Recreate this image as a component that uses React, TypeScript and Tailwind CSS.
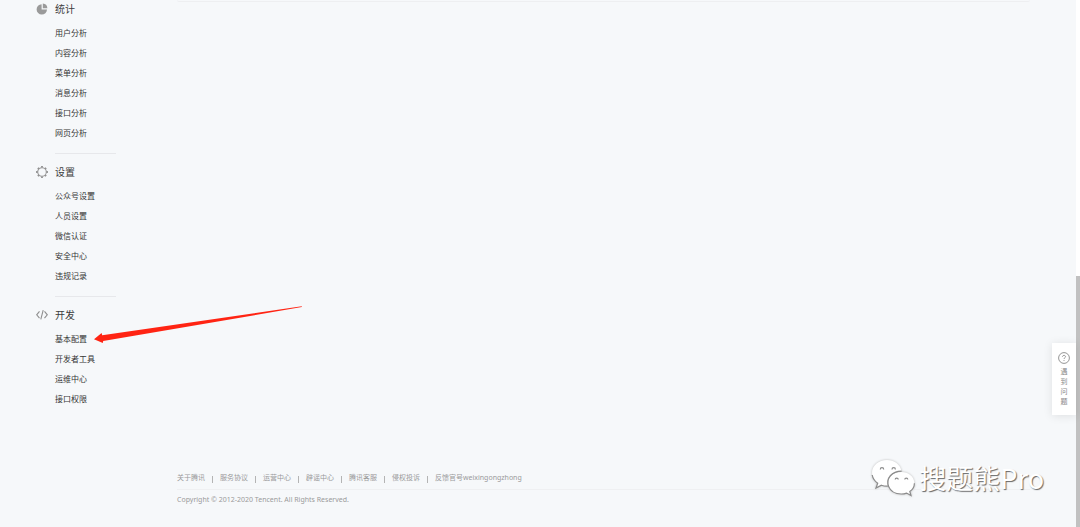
import type { ReactNode } from "react";

const FONT = "font-['Noto_Sans','Noto_Sans_CJK_SC',sans-serif]";

function ChartIcon() {
  return (
    <svg viewBox="0 0 12 12" className="size-3" fill="#9a9a9a" aria-hidden="true">
      <path d="M5.6 1.2V6.6H11A5.2 5.2 0 1 1 5.6 1.2Z" />
      <path d="M6.8 0.6A5 5 0 0 1 11.4 5.2H6.8Z" />
    </svg>
  );
}

function GearIcon() {
  return (
    <svg viewBox="0 0 12 12" className="size-3" aria-hidden="true">
      <circle cx="6" cy="6" r="4.3" fill="none" stroke="#9a9a9a" strokeWidth="1.1" />
      <g stroke="#8f8f8f" strokeWidth="1.8">
        <path d="M6 0.1V1.6M6 10.4V11.9M0.1 6H1.6M10.4 6H11.9" />
        <path d="M1.9 1.9L2.9 2.9M9.1 9.1L10.1 10.1M10.1 1.9L9.1 2.9M2.9 9.1L1.9 10.1" />
      </g>
    </svg>
  );
}

function CodeIcon() {
  return (
    <svg viewBox="0 0 12 12" className="size-3" fill="none" stroke="#8f8f8f" strokeWidth="1.1" aria-hidden="true">
      <path d="M3.5 2.4L0.7 5.8L3.5 9.2M8.5 2.4L11.3 5.8L8.5 9.2M7.2 1.2L4.8 10.4" />
    </svg>
  );
}

const MENU: { title: string; icon: ReactNode; items: string[] }[] = [
  { title: "统计", icon: <ChartIcon />, items: ["用户分析", "内容分析", "菜单分析", "消息分析", "接口分析", "网页分析"] },
  { title: "设置", icon: <GearIcon />, items: ["公众号设置", "人员设置", "微信认证", "安全中心", "违规记录"] },
  { title: "开发", icon: <CodeIcon />, items: ["基本配置", "开发者工具", "运维中心", "接口权限"] },
];

const LINKS = ["关于腾讯", "服务协议", "运营中心", "辟谣中心", "腾讯客服", "侵权投诉", "反馈官号weixingongzhong"];

function Sidebar() {
  return (
    <nav className="w-[177px] shrink-0 pl-9">
      {MENU.map((group, i) => (
        <section key={group.title}>
          {i > 0 && <hr className="ml-[19px] mt-2.5 mb-[9px] w-[61px] border-[#e7e8eb]" />}
          <h2 className="flex h-[18px] items-center gap-[7px] text-[10px] text-[#3c3c3c]">
            {group.icon}
            {group.title}
          </h2>
          <ul className="mt-[5px] ml-[19px] text-[8px] leading-5 text-[#353535]">
            {group.items.map(item => (
              <li key={item}>
                <a href="#" className="block">{item}</a>
              </li>
            ))}
          </ul>
        </section>
      ))}
    </nav>
  );
}

function Footer() {
  return (
    <footer className="pb-5 text-[7px] text-[#9a9a9a]">
      <ul className="flex items-center border-b border-[#eff0f2] pb-[3px] leading-4">
        {LINKS.map((link, i) => (
          <li key={link} className="flex items-center">
            {i > 0 && <span className="mx-[7px] mt-0.5 h-[7px] w-px bg-[#b4b4b4]" />}
            <a href="#">{link}</a>
          </li>
        ))}
      </ul>
      <p className="pt-[3px] leading-[14px]">Copyright © 2012-2020 Tencent. All Rights Reserved.</p>
    </footer>
  );
}

function HelpButton() {
  return (
    <button className="absolute top-[343px] right-1 flex w-6 flex-col items-center bg-white pt-[9px] pb-2 text-[7px] leading-[10px] text-[#8a8a8a] shadow-[0_1px_10px_rgba(0,0,0,0.1)]">
      <svg viewBox="0 0 12 12" className="mb-[3px] size-3" fill="none" stroke="#8a8a8a" strokeWidth="0.9" aria-hidden="true">
        <circle cx="6" cy="6" r="5.4" />
        <path d="M4.5 4.8C4.5 2.9 7.5 2.9 7.5 4.7C7.5 5.8 6 5.8 6 7M6 8V8.9" />
      </svg>
      <span className="w-[7px] break-all">遇到问题</span>
    </button>
  );
}

function Arrow() {
  return (
    <svg viewBox="0 0 210 40" className="absolute top-[305px] left-[93px] h-10 w-[210px]" fill="#ff2413" aria-hidden="true">
      <path d="M1 34.3L8.6 28L9.2 30.3L208.8 1.2L208.8 2.1L10.2 36L9.8 38Z" />
    </svg>
  );
}

function Watermark() {
  return (
    <div className="absolute right-9 bottom-[30px] flex items-center gap-1">
      <svg viewBox="0 0 44 38" className="h-[38px] w-11 drop-shadow-[0_0_1px_#bbb]" fill="#fff" aria-hidden="true">
        <path d="M16 1C7.4 1 1 6.6 1 14C1 18.2 3.2 21.8 6.7 24.2L5 29L10.4 26.2C12.4 26.9 14.4 27.2 16.8 27.1C13.8 19 20.6 11.8 30.6 12C29.2 5.6 23.4 1 16 1Z" />
        <path d="M30.2 13C22.8 13 17 17.8 17 24C17 30.2 22.8 35 30.2 35C32.2 35 34 34.7 35.6 34.1L40 36.6L38.8 32.5C41.8 30.5 43.4 27.6 43.4 24.2C43.4 17.8 37.6 13 30.2 13Z" />
        <g fill="none" stroke="#8c8c8c" strokeWidth="1.2">
          <path d="M9.3 10.4A1.7 1.7 0 0 1 12.7 10.4M21 10.4A1.7 1.7 0 0 1 24.4 10.4M24.2 20.6A1.5 1.5 0 0 1 27.2 20.6M33.8 20.6A1.5 1.5 0 0 1 36.8 20.6" />
          <path d="M1.2 16C1.8 19.4 3.8 22.2 6.7 24.2L5 29L10.4 26.2C12.4 26.9 14.4 27.2 16.8 27.1M17.8 28C14.4 19.6 21 12.2 30.6 12.2M17.6 27.4C19.4 32 24.4 35 30.2 35C32.2 35 34 34.7 35.6 34.1L40 36.6L38.8 32.5C41.8 30.5 43.4 27.6 43.4 24.2" />
        </g>
      </svg>
      <span className="font-['Noto_Sans_CJK_SC',sans-serif] text-[27px] leading-9 text-white [text-shadow:1px_1px_1px_#666]">搜题熊Pro</span>
    </div>
  );
}

export default function App() {
  return (
    <div className={`relative flex min-h-screen bg-[#f6f8fa] ${FONT}`}>
      <Sidebar />
      <main className="mr-[46px] flex min-w-0 flex-1 flex-col justify-between">
        <div className="h-0.5 rounded-b-sm border-b border-[#eeeff1]" />
        <Footer />
      </main>
      <div className="flex w-1 flex-col justify-end bg-white">
        <div className="h-[251px] bg-[#c1c1c1]" />
      </div>
      <Arrow />
      <HelpButton />
      <Watermark />
    </div>
  );
}
